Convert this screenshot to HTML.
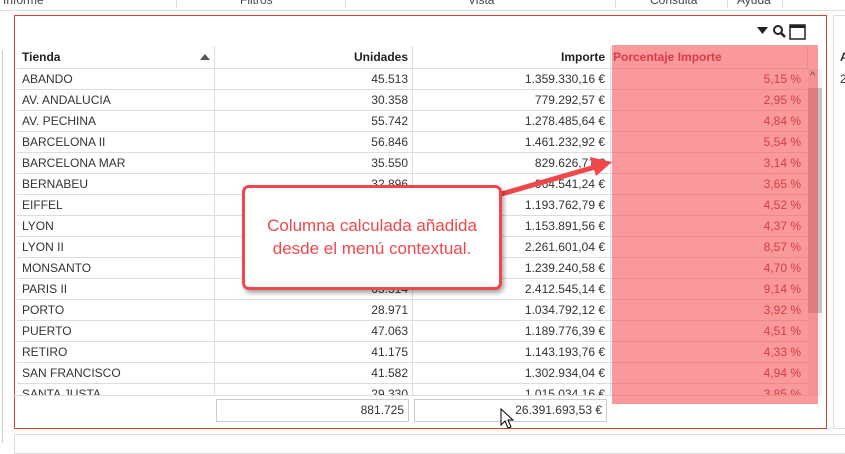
<!DOCTYPE html>
<html><head><meta charset="utf-8"><style>
*{margin:0;padding:0;box-sizing:border-box}
body{width:845px;height:443px;background:#fff;position:relative;overflow:hidden;font-family:"Liberation Sans",sans-serif;font-size:12px;color:#333}
.abs{position:absolute}
.row{position:absolute;left:17px;width:791px;height:21px;border-bottom:1px solid #ddd}
.c{position:absolute;top:0;height:21px;line-height:21px;white-space:nowrap}
.vl{position:absolute;width:1px;background:#ddd}
</style></head><body>
<div class="abs" style="left:0;top:0;width:845px;height:11px;border-bottom:1px solid #ddd;font-size:12px;color:#444;line-height:4px">
 <span class="abs" style="left:3px;top:-2px">Informe</span>
 <span class="abs" style="left:240px;top:-2px">Filtros</span>
 <span class="abs" style="left:468px;top:-2px">Vista</span>
 <span class="abs" style="left:650px;top:-2px">Consulta</span>
 <span class="abs" style="left:737px;top:-2px">Ayuda</span>
 <div class="abs" style="left:176px;top:0;width:1px;height:8px;background:#ddd"></div>
 <div class="abs" style="left:345px;top:0;width:1px;height:8px;background:#ddd"></div>
 <div class="abs" style="left:615px;top:0;width:1px;height:8px;background:#ddd"></div>
 <div class="abs" style="left:727px;top:0;width:1px;height:8px;background:#ddd"></div>
 <div class="abs" style="left:782px;top:0;width:1px;height:8px;background:#ddd"></div>
</div>
<div class="abs" style="left:0;top:50px;width:3px;height:393px;border-right:1px solid #ccc"></div>
<div class="abs" style="left:14px;top:15px;width:813px;height:414px;border:1px solid #d04a2a"></div>
<div class="abs" style="left:833px;top:15px;width:20px;height:414px;border:1px solid #ddd"></div>
<div class="abs" style="left:840px;top:50px;font-weight:bold">A</div>
<div class="abs" style="left:840px;top:72px">2</div>
<div class="abs" style="left:14px;top:434px;width:840px;height:20px;border:1px solid #ddd"></div>
<svg class="abs" style="left:756px;top:24px" width="62" height="16"><path d="M1 3h11l-5.5 7z" fill="#222"/><circle cx="22" cy="6" r="4" fill="none" stroke="#222" stroke-width="2"/><path d="M25 9l4 4" stroke="#222" stroke-width="2.5"/><rect x="34" y="1" width="15" height="14" fill="none" stroke="#222" stroke-width="1.5"/><rect x="34" y="1" width="15" height="3" fill="#222"/></svg>
<div class="abs" style="left:17px;top:46px;width:791px;height:23px;border-bottom:1px solid #ddd;font-weight:bold;color:#222;line-height:23px">
 <span class="abs" style="left:5px">Tienda</span>
 <svg class="abs" style="left:183px;top:8px" width="10" height="7"><path d="M0 6h10L5 0z" fill="#555"/></svg>
 <span class="abs" style="right:400px">Unidades</span>
 <span class="abs" style="right:203px">Importe</span>
 <span class="abs" style="left:596px;color:#b03040">Porcentaje Importe</span>
</div>
<div class="vl" style="left:214px;top:46px;height:350px"></div>
<div class="vl" style="left:412px;top:46px;height:350px"></div>
<div class="vl" style="left:610px;top:46px;height:350px"></div>
<div class="vl" style="left:807px;top:46px;height:23px"></div>
<div id="rows"></div>
<script>
var d=[["ABANDO","45.513","1.359.330,16 €","5,15 %"],["AV. ANDALUCIA","30.358","779.292,57 €","2,95 %"],["AV. PECHINA","55.742","1.278.485,64 €","4,84 %"],["BARCELONA II","56.846","1.461.232,92 €","5,54 %"],["BARCELONA MAR","35.550","829.626,71 €","3,14 %"],["BERNABEU","32.896","964.541,24 €","3,65 %"],["EIFFEL","","1.193.762,79 €","4,52 %"],["LYON","","1.153.891,56 €","4,37 %"],["LYON II","","2.261.601,04 €","8,57 %"],["MONSANTO","","1.239.240,58 €","4,70 %"],["PARIS II","63.314","2.412.545,14 €","9,14 %"],["PORTO","28.971","1.034.792,12 €","3,92 %"],["PUERTO","47.063","1.189.776,39 €","4,51 %"],["RETIRO","41.175","1.143.193,76 €","4,33 %"],["SAN FRANCISCO","41.582","1.302.934,04 €","4,94 %"],["SANTA JUSTA","29.330","1.015.034,16 €","3,85 %"]];
var h="";d.forEach(function(r,i){var t=69+i*21;h+='<div class="row" style="top:'+t+'px"><span class="c" style="left:5px">'+r[0]+'</span><span class="c" style="right:400px">'+r[1]+'</span><span class="c" style="right:203px">'+r[2]+'</span><span class="c" style="right:7px;color:#a33">'+r[3]+'</span></div>';});
document.getElementById("rows").innerHTML='<div class="abs" style="left:0;top:0;width:845px;height:396px;overflow:hidden">'+h+'</div>';
</script>
<div class="abs" style="left:14px;top:395px;width:796px;height:1px;background:#ddd"></div>
<div class="abs" style="left:808px;top:69px;width:14px;height:327px;background:#f0f0f0"></div>
<div class="abs" style="left:808px;top:88px;width:14px;height:225px;background:#c2c2c2"></div>
<div class="abs" style="left:612px;top:45px;width:206px;height:359px;background:rgba(245,70,75,0.55)"></div>
<div class="abs" style="left:810px;top:70px;color:#555;font-size:11px">^</div>
<div class="abs" style="left:216px;top:399px;width:193px;height:23px;border:1px solid #ccc;text-align:right;padding-right:4px;line-height:21px">881.725</div>
<div class="abs" style="left:414px;top:399px;width:193px;height:23px;border:1px solid #ccc;text-align:right;padding-right:4px;line-height:21px">26.391.693,53 €</div>
<svg class="abs" style="left:500px;top:408px" width="14" height="22"><path d="M1 1v16l4-4 3 7 3-1-3-7h5z" fill="#fff" stroke="#000"/></svg>
<svg class="abs" style="left:490px;top:150px" width="130" height="60"><path d="M8 45L112 15" stroke="#f0464c" stroke-width="5"/><path d="M122 12L100 7 106 26z" fill="#f0464c"/></svg>
<div class="abs" style="left:242px;top:185px;width:260px;height:105px;background:#fff;border:3px solid #f0464c;border-radius:7px;box-shadow:2px 3px 5px rgba(0,0,0,.35);color:#f0464c;font-size:17px;text-align:center;padding-top:26px;line-height:23px">Columna calculada añadida<br>desde el menú contextual.</div>
</body></html>
